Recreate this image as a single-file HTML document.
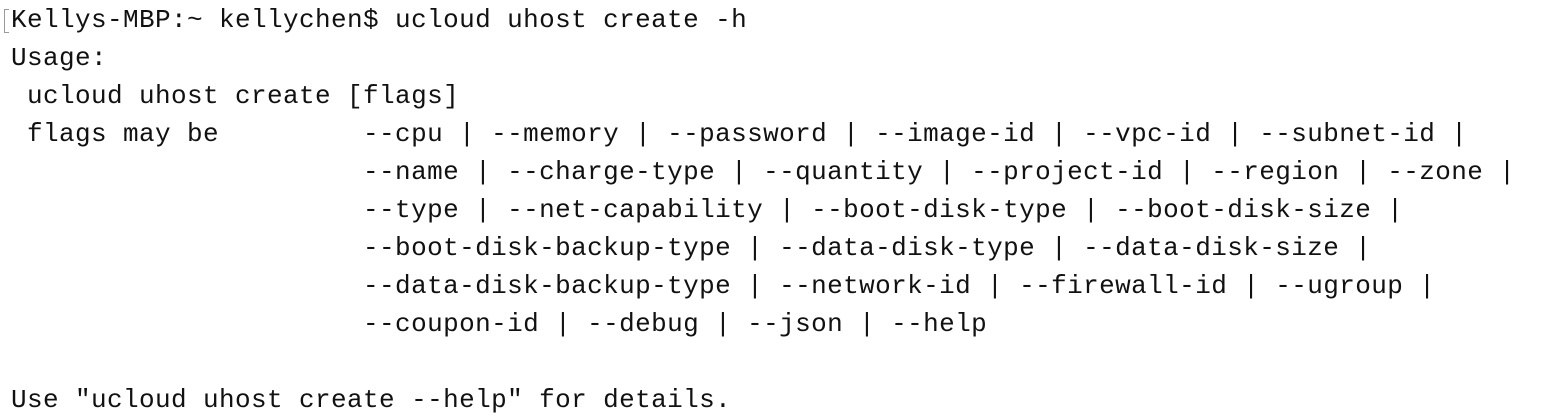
<!DOCTYPE html>
<html><head><meta charset="utf-8"><style>
html,body{margin:0;padding:0;background:#fff;width:1552px;height:418px;overflow:hidden}
pre{position:absolute;left:11px;top:1px;margin:0;font-family:"Liberation Mono",monospace;font-size:26px;letter-spacing:0.4px;line-height:38px;color:#111}
.b{position:absolute;left:4px;top:9px;width:4px;height:22px;border:1px solid #999;border-right:none}
</style></head><body>
<div class="b"></div>
<pre>Kellys-MBP:~ kellychen$ ucloud uhost create -h
Usage:
 ucloud uhost create [flags]
 flags may be         --cpu | --memory | --password | --image-id | --vpc-id | --subnet-id |
                      --name | --charge-type | --quantity | --project-id | --region | --zone |
                      --type | --net-capability | --boot-disk-type | --boot-disk-size |
                      --boot-disk-backup-type | --data-disk-type | --data-disk-size |
                      --data-disk-backup-type | --network-id | --firewall-id | --ugroup |
                      --coupon-id | --debug | --json | --help

Use "ucloud uhost create --help" for details.</pre>
</body></html>
